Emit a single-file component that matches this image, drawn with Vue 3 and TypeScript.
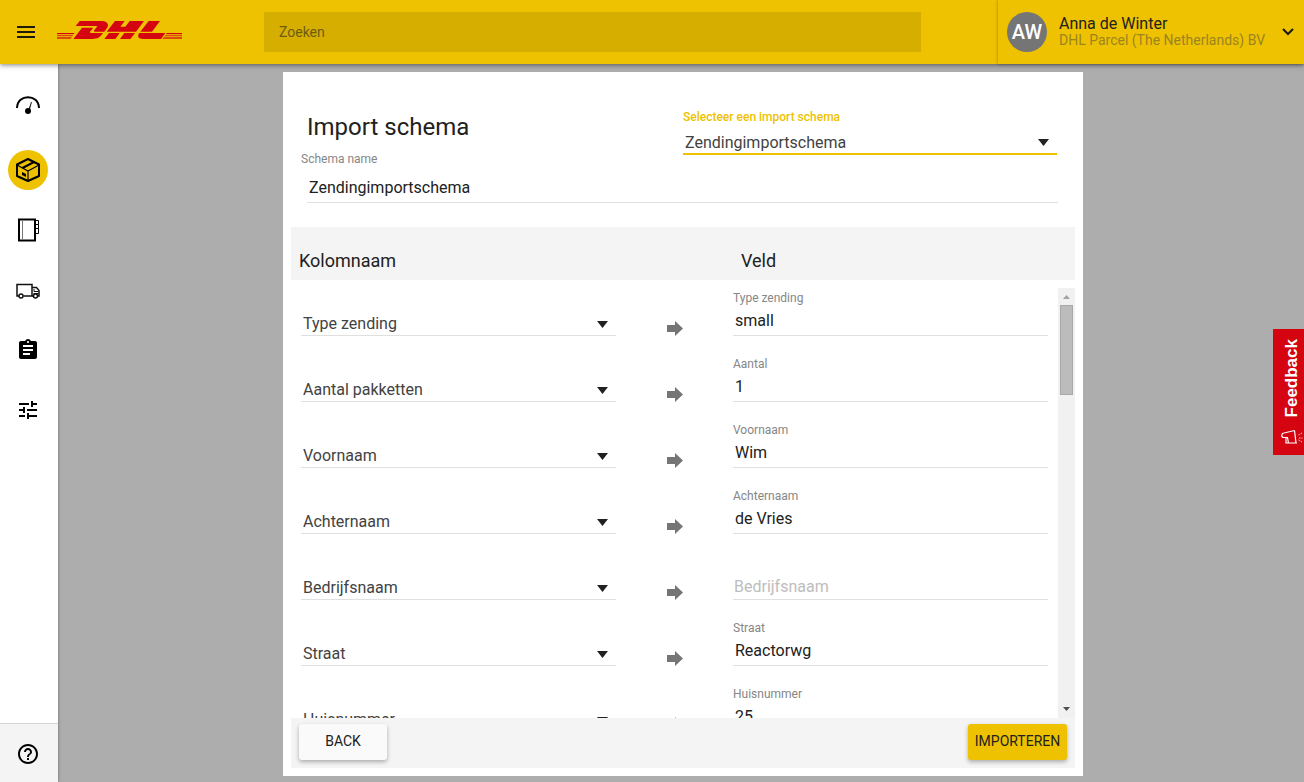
<script setup lang="ts">
import { ref } from 'vue'

interface Mapping {
  id: string
  column: string
  label: string
  value: string
}

const search = ref('')
const schema = ref('Zendingimportschema')
const schemaName = ref('Zendingimportschema')

const mappings = ref<Mapping[]>([
  { id: 'type', column: 'Type zending', label: 'Type zending', value: 'small' },
  { id: 'count', column: 'Aantal pakketten', label: 'Aantal', value: '1' },
  { id: 'first', column: 'Voornaam', label: 'Voornaam', value: 'Wim' },
  { id: 'last', column: 'Achternaam', label: 'Achternaam', value: 'de Vries' },
  { id: 'company', column: 'Bedrijfsnaam', label: 'Bedrijfsnaam', value: '' },
  { id: 'street', column: 'Straat', label: 'Straat', value: 'Reactorwg' },
  { id: 'number', column: 'Huisnummer', label: 'Huisnummer', value: '25' },
])

const columns = mappings.value.map((m) => m.column)
</script>

<template>
  <div class="app">
    <header class="topbar">
      <button class="menu" type="button" aria-label="Menu">
        <svg width="18" height="12" viewBox="0 0 18 12"><path d="M0 0h18v2H0zM0 5h18v2H0zM0 10h18v2H0z" /></svg>
      </button>
      <a class="brand" href="#" aria-label="DHL">
        <svg width="125" height="18" viewBox="171 63 375 54">
          <g fill="#d40511">
            <path d="M239 63H306C323 63 328 75 321 84L313 95H285C281 95 281 93 283 90L290 82C292 79 291 78 288 78H227Z" />
            <path d="M220 117L246 83H276C279 83 279 85 277 87L271 94C269 97 269 99 273 99H309C303 108 295 117 277 117Z" />
            <path d="M345 63H374L361 80H376L389 63H432L408 95H320Z" />
            <path d="M327 99H359L346 117H313ZM373 99H405L391 117H360Z" />
            <path d="M446 63H480L456 95H421Z" />
            <path d="M418 99H496L483 117H430C414 117 411 108 418 99Z" />
            <path d="M171 99H224L222 102H171ZM500 99H546V102H498Z" />
          </g>
          <g fill="#dc4a0c">
            <path d="M171 104H220L217 109H171ZM171 111H216L212 117H171ZM497 104H546V109H493ZM492 111H546V117H487Z" />
          </g>
        </svg>
      </a>
      <input v-model="search" class="search" type="search" placeholder="Zoeken" aria-label="Zoeken" />
      <button class="user" type="button">
        <span class="avatar">AW</span>
        <span class="who">
          <span class="name">Anna de Winter</span>
          <span class="company">DHL Parcel (The Netherlands) BV</span>
        </span>
        <svg width="12" height="8" viewBox="0 0 12 8"><path d="M1 1l5 5 5-5" fill="none" stroke="#1d1a0c" stroke-width="2" /></svg>
      </button>
    </header>

    <div class="body">
      <nav class="sidebar">
        <div class="links">
          <a href="#" aria-label="Dashboard">
            <svg viewBox="0 0 40 40">
              <path d="M9 18C9.500 3.500 30.500 3.500 31 18" fill="none" stroke="#000" stroke-width="2" />
              <path d="M23.500 12L21.500 20H20.500Z" stroke="#000" stroke-width=".5" />
              <circle cx="20" cy="21" r="3" />
            </svg>
          </a>
          <a href="#" class="active" aria-label="Zendingen">
            <svg viewBox="0 0 40 40">
              <g fill="none" stroke="#000" stroke-linejoin="round">
                <path d="M20 9L31 14.500V26L20 31L9 26V14.500Z" stroke-width="2" />
                <path d="M9 15L20 21L31 15M20 21V31" stroke-width="1.200" />
                <path d="M14.500 18L26 12" stroke-width="2" />
              </g>
              <path d="M14 22L18 24V27L14 25Z" />
            </svg>
          </a>
          <a href="#" aria-label="Adresboek">
            <svg viewBox="0 0 40 40">
              <path d="M11 9.500H27V30.500H11Z" fill="none" stroke="#000" stroke-width="2" />
              <path d="M14.500 10V30" stroke="#777" />
              <path d="M28 10.500H30.500V14.500H28M28 14.500H30.500V18.500H28M28 18.500H30.500V23.500H28" fill="none" stroke="#000" />
            </svg>
          </a>
          <a href="#" aria-label="Ophalen">
            <svg viewBox="0 0 40 40">
              <g fill="none" stroke="#111" stroke-width="1.500">
                <path d="M11 26H9V14.500H24V26H15.500" />
                <path d="M24 17.500H28.500L31 20.500V26H29.500M24 26H26" />
                <path d="M26 19V21.500H30.500M25.500 23.500H30.500" stroke-width="1" />
                <circle cx="13" cy="26" r="2" />
                <circle cx="27.500" cy="26" r="2" />
              </g>
            </svg>
          </a>
          <a href="#" aria-label="Rapporten">
            <svg viewBox="0 0 40 40">
              <path transform="translate(8 8)" d="M19 3h-4.180C14.400 1.840 13.300 1 12 1s-2.400.84-2.820 2H5c-1.100 0-2 .9-2 2v14c0 1.100.9 2 2 2h14c1.100 0 2-.9 2-2V5c0-1.100-.9-2-2-2zm-7 0c.55 0 1 .45 1 1s-.45 1-1 1-1-.45-1-1 .45-1 1-1zm2 14H7v-2h7v2zm3-4H7v-2h10v2zm0-4H7V7h10v2z" />
            </svg>
          </a>
          <a href="#" aria-label="Instellingen">
            <svg viewBox="0 0 40 40">
              <path transform="translate(8 8)" d="M3 17v2h6v-2H3zM3 5v2h10V5H3zm10 16v-2h8v-2h-8v-2h-2v6h2zM7 9v2H3v2h4v2h2V9H7zm14 4v-2H11v2h10zm-6-4h2V7h4V5h-4V3h-2v6z" />
            </svg>
          </a>
        </div>
        <a href="#" class="help" aria-label="Help">
          <svg width="24" height="24" viewBox="0 0 24 24">
            <path d="M11 18h2v-2h-2v2zm1-16C6.480 2 2 6.480 2 12s4.480 10 10 10 10-4.480 10-10S17.520 2 12 2zm0 18c-4.410 0-8-3.590-8-8s3.590-8 8-8 8 3.590 8 8-3.590 8-8 8zm0-14c-2.210 0-4 1.790-4 4h2c0-1.100.9-2 2-2s2 .9 2 2c0 2-3 1.750-3 5h2c0-2.250 3-2.500 3-5 0-2.210-1.790-4-4-4z" />
          </svg>
        </a>
      </nav>

      <main class="stage">
        <form class="dialog" @submit.prevent>
          <section class="intro">
            <h1>Import schema</h1>
            <div class="pick">
              <label for="schema">Selecteer een import schema</label>
              <div class="select focus">
                <select id="schema" v-model="schema">
                  <option>Zendingimportschema</option>
                </select>
                <svg width="12" height="10" viewBox="0 0 12 10"><path d="M1 2h11L6.500 9z" /></svg>
              </div>
            </div>
            <label class="small name-label" for="schema-name">Schema name</label>
            <input id="schema-name" v-model="schemaName" class="text" type="text" />
          </section>

          <div class="heads">
            <h2>Kolomnaam</h2>
            <h2 class="second">Veld</h2>
          </div>

          <div class="scroller">
            <div class="rows">
              <div v-for="m in mappings" :key="m.id" class="row">
                <div class="select">
                  <select v-model="m.column" :aria-label="'Kolom voor ' + m.label">
                    <option v-for="c in columns" :key="c">{{ c }}</option>
                  </select>
                  <svg width="12" height="10" viewBox="0 0 12 10"><path d="M1 2h11L6.500 9z" /></svg>
                </div>
                <svg class="arrow" width="16" height="16" viewBox="0 0 16 16"><path d="M0 5h8V1l8 7.500-8 7.500v-4H0z" /></svg>
                <div class="field">
                  <label v-if="m.value" class="small" :for="m.id">{{ m.label }}</label>
                  <input
                    :id="m.id"
                    v-model="m.value"
                    class="text"
                    type="text"
                    :placeholder="m.label"
                    :aria-label="m.label"
                  />
                </div>
              </div>
            </div>
            <div class="scrollbar" aria-hidden="true">
              <svg width="17" height="17" viewBox="0 0 17 17"><path d="M5 11h7L8.500 7z" fill="#a3a3a3" /></svg>
              <div class="thumb"></div>
              <svg class="down" width="17" height="17" viewBox="0 0 17 17"><path d="M5 6h7l-3.500 4z" fill="#505050" /></svg>
            </div>
          </div>

          <footer class="actions">
            <button type="button" class="back">BACK</button>
            <button type="submit" class="import">IMPORTEREN</button>
          </footer>
        </form>
      </main>
    </div>

    <button class="feedback" type="button">
      <span>Feedback</span>
      <svg width="22" height="16" viewBox="0 0 22 16" fill="none" stroke="#fff" stroke-width="1.200">
        <path d="M13.500 1.500L3 4C0 4.500 0 8.500 3 8.500H5V14H16M13.500 1.500L15 14M5 8.500H6.500L7.500 14" />
        <path d="M17.500 6l3.500-2M18 9h3.500M17.500 11l3.500 2" stroke-width=".8" stroke-dasharray="1.500 1" />
      </svg>
    </button>
  </div>
</template>

<style>
body {
  margin: 0;
}
</style>

<style scoped>
.app {
  display: flex;
  flex-direction: column;
  height: 100vh;
  overflow: hidden;
  background: #adadad;
  color: #212121;
  font-family: Roboto, 'Liberation Sans', sans-serif;
  font-size: 16px;
}
.app * {
  box-sizing: border-box;
}
button,
input,
select {
  font: inherit;
  color: inherit;
  border: 0;
  border-radius: 0;
  padding: 0;
  background: none;
  outline: none;
}
h1,
h2 {
  margin: 0;
  font-weight: 400;
}
svg {
  display: block;
  flex: none;
}
.topbar {
  position: relative;
  z-index: 2;
  display: flex;
  align-items: center;
  flex: none;
  height: 64px;
  background: #eec200;
  box-shadow: 0 1px 5px rgba(0, 0, 0, 0.5);
}
.menu {
  padding: 12px 17px;
  fill: #1d1a0c;
}
.brand {
  margin-left: 5px;
  padding-bottom: 4px;
}
.search {
  flex: 1;
  min-width: 0;
  height: 40px;
  margin: 0 77px 0 82px;
  padding: 0 15px;
  background: #d6ae00;
  font-size: 14px;
  appearance: none;
}
.search::placeholder {
  color: #6e5c11;
  opacity: 1;
}
.user {
  display: flex;
  align-items: center;
  width: 306px;
  height: 64px;
  padding: 0 10px 0 9px;
  text-align: left;
  box-shadow: 0 0 3px rgba(0, 0, 0, 0.35);
}
.avatar {
  flex: none;
  width: 40px;
  border-radius: 50%;
  background: #757575;
  color: #fff;
  font-size: 20px;
  font-weight: 500;
  line-height: 40px;
  text-align: center;
}
.who {
  flex: 1;
  margin-left: 12px;
  white-space: nowrap;
}
.name,
.company {
  display: block;
  line-height: 16px;
}
.name {
  font-size: 16px;
}
.company {
  font-size: 14px;
  color: #9c8422;
}
.body {
  display: flex;
  flex: 1;
  min-height: 0;
}
.sidebar {
  display: flex;
  flex-direction: column;
  justify-content: space-between;
  flex: none;
  width: 58px;
  background: #fff;
  box-shadow: 0 0 3px rgba(0, 0, 0, 0.4);
}
.links {
  display: flex;
  flex-direction: column;
  gap: 20px;
  padding: 26px 0 0 8px;
}
.links a {
  width: 40px;
  height: 40px;
  border-radius: 50%;
}
.links .active {
  background: #eec200;
}
.help {
  padding: 18px 16px 16px;
  border-top: 1px solid #d4d4d4;
  background: #f4f4f4;
}
.stage {
  display: flex;
  justify-content: center;
  flex: 1;
  min-width: 0;
  padding: 8px 0 6px 4px;
}
.dialog {
  display: flex;
  flex-direction: column;
  width: 100%;
  max-width: 800px;
  padding: 8px;
  background: #fff;
}
.intro {
  display: grid;
  grid-template-columns: 1fr 1fr;
  grid-template-rows: 71px 16px auto;
  padding-bottom: 24px;
}
h1 {
  padding: 31px 0 0 16px;
  font-size: 24px;
  line-height: 32px;
}
.pick {
  grid-column: 2;
  grid-row: 1 / 3;
  padding: 29px 18px 0 0;
}
.pick label {
  display: block;
  margin-bottom: 6px;
  color: #eec200;
  font-size: 12px;
  font-weight: 500;
  line-height: 16px;
}
.small {
  display: block;
  color: #868686;
  font-size: 12px;
  line-height: 16px;
}
.name-label {
  padding-left: 10px;
}
.intro .text {
  grid-column: 1 / 3;
  width: auto;
  margin: 6px 17px 0 16px;
}
.text {
  display: block;
  width: 100%;
  height: 30px;
  padding: 0 2px;
  border-bottom: 1px solid #e0e0e0;
  font-size: 16px;
}
.select {
  display: grid;
  align-items: center;
  height: 24px;
  border-bottom: 1px solid #e0e0e0;
}
.select select {
  grid-area: 1 / 1;
  width: 100%;
  padding-left: 2px;
  appearance: none;
  color: #424242;
  font-size: 16px;
}
.select svg {
  grid-area: 1 / 1;
  justify-self: end;
  margin-right: 8px;
  fill: #212121;
  pointer-events: none;
}
.focus {
  border-bottom: 2px solid #eec200;
}
.heads,
.row {
  display: grid;
  grid-template-columns: 1fr 117px 1fr;
}
.heads {
  padding: 22px 27px 7px 8px;
  background: #f4f4f4;
}
.heads h2 {
  font-size: 18px;
  line-height: 24px;
}
.heads .second {
  grid-column: 3;
  padding-left: 9px;
}
.scroller {
  display: flex;
  flex: 1;
  min-height: 0;
  margin-top: 8px;
}
.rows {
  flex: 1;
  overflow: hidden;
}
.row {
  align-items: end;
  height: 66px;
  padding: 0 10px 18px;
}
.arrow {
  justify-self: center;
  fill: #757575;
}
.text::placeholder {
  color: #bdbdbd;
  opacity: 1;
}
.text:placeholder-shown {
  padding: 4px 1px 0;
}
.scrollbar {
  display: flex;
  flex-direction: column;
  align-items: center;
  width: 17px;
  background: #f1f1f1;
}
.thumb {
  width: 13px;
  height: 90px;
  border: 1px solid #a8a8a8;
  background: #bcbcbc;
}
.down {
  margin-top: auto;
}
.actions {
  display: flex;
  justify-content: space-between;
  flex: none;
  padding: 6px 8px 8px;
  background: #f4f4f4;
}
.actions button {
  height: 36px;
  padding: 0 6px 2px;
  border-radius: 3px;
  font-size: 14px;
  box-shadow: 0 2px 4px rgba(0, 0, 0, 0.3);
}
.actions .back {
  min-width: 88px;
  background: #fafafa;
}
.actions .import {
  min-width: 99px;
  background: #eec200;
}
.feedback {
  position: fixed;
  top: 329px;
  right: 0;
  display: flex;
  flex-direction: column;
  align-items: center;
  justify-content: space-between;
  width: 31px;
  height: 126px;
  padding: 10px 0 10px 6px;
  background: #d40511;
  color: #fff;
  font-family: 'Liberation Sans', sans-serif;
  font-size: 17px;
  font-weight: 700;
}
.feedback span {
  writing-mode: vertical-rl;
  transform: rotate(180deg);
  line-height: 20px;
}
</style>
